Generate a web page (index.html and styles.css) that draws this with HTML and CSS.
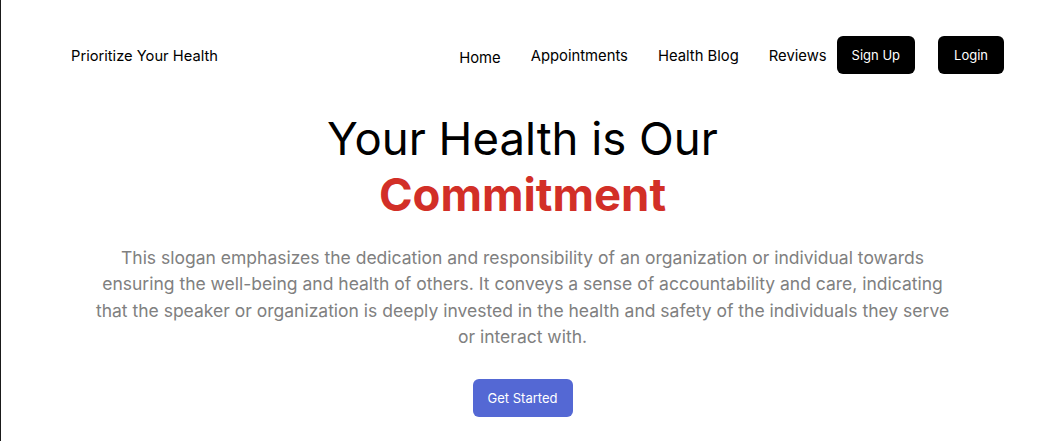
FILE: index.html
```html
<!DOCTYPE html>
<html lang="en">
<head>
<meta charset="utf-8">
<title>Prioritize Your Health</title>
<link rel="stylesheet" href="styles.css">
</head>
<body>
<div class="page">
  <header class="header">
    <div class="logo">Prioritize Your Health</div>
    <nav class="nav">
      <a class="nav-link nav-home" href="#">Home</a>
      <a class="nav-link" href="#">Appointments</a>
      <a class="nav-link" href="#">Health Blog</a>
      <a class="nav-link nav-last" href="#">Reviews</a>
      <div class="auth">
        <button class="btn-dark">Sign Up</button>
        <button class="btn-dark btn-login">Login</button>
      </div>
    </nav>
  </header>
  <main class="hero">
    <h1 class="title">Your Health is Our<br><span class="accent">Commitment</span></h1>
    <p class="lead">This slogan emphasizes the dedication and responsibility of an organization or individual towards ensuring the well-being and health of others. It conveys a sense of accountability and care, indicating that the speaker or organization is deeply invested in the health and safety of the individuals they serve or interact with.</p>
    <button class="btn-primary">Get Started</button>
  </main>
</div>
</body>
</html>
```
FILE: styles.css
```css
* { box-sizing: border-box; }
html, body { margin: 0; padding: 0; background: #fff; }
body { font-family: Inter, "Noto Sans", sans-serif; color: #000; }
.page {
  min-height: 441px;
  border-left: 1px solid #1a1a1a;
}
.header {
  display: flex;
  align-items: center;
  justify-content: space-between;
  padding: 36px 40px 0 70px;
}
.logo { font-size: 14.7px; font-weight: 400; padding-top: 2px; }
.nav { display: flex; align-items: center; }
.nav-link {
  color: #000;
  text-decoration: none;
  font-size: 14.8px;
  margin-right: 30px;
  margin-top: 2px;
}
.nav-last { margin-right: 10px; }
.nav-home { margin-top: 6px; }
.auth { display: flex; gap: 23px; }
.btn-dark {
  background: #000;
  color: #fff;
  border: 0;
  border-radius: 6px;
  height: 38px;
  padding: 0 15px;
  font-family: inherit;
  font-size: 13px;
}
.btn-login { padding: 0 16px; }
.hero {
  display: flex;
  flex-direction: column;
  align-items: center;
  text-align: center;
  padding-top: 37px;
}
.title {
  margin: 0;
  font-size: 45.5px;
  font-weight: 400;
  line-height: 56px;
}
.accent { color: #d22f27; font-weight: 700; }
.lead {
  margin: 22px 0 0;
  width: 864px;
  font-size: 17.5px;
  line-height: 26.3px;
  color: #808080;
}
.btn-primary {
  margin-top: 29px;
  background: #5468d4;
  color: #fff;
  border: 0;
  border-radius: 6px;
  height: 38px;
  width: 100px;
  font-family: inherit;
  font-size: 13px;
}
```
